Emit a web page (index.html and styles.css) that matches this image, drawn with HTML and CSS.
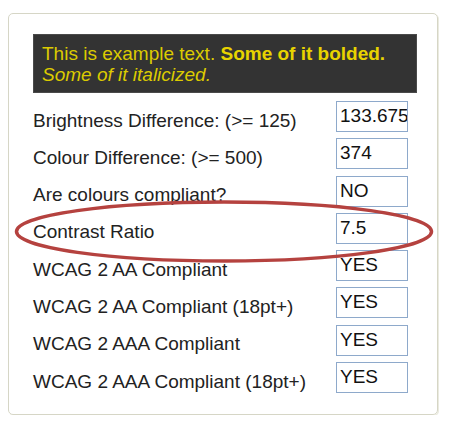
FILE: index.html
```html
<!DOCTYPE html>
<html>
<head>
<meta charset="utf-8">
<link rel="stylesheet" href="styles.css">
</head>
<body>
<div class="card">
  <div class="sample">
    <div>This is example text. <b>Some of it bolded.</b></div>
    <div><i>Some of it italicized.</i></div>
  </div>
  <div class="rows">
    <div class="row"><span class="label">Brightness Difference: (&gt;= 125)</span><span class="field">133.675</span></div>
    <div class="row"><span class="label">Colour Difference: (&gt;= 500)</span><span class="field">374</span></div>
    <div class="row"><span class="label">Are colours compliant?</span><span class="field">NO</span></div>
    <div class="row"><span class="label">Contrast Ratio</span><span class="field">7.5</span></div>
    <div class="row"><span class="label">WCAG 2 AA Compliant</span><span class="field">YES</span></div>
    <div class="row"><span class="label">WCAG 2 AA Compliant (18pt+)</span><span class="field">YES</span></div>
    <div class="row"><span class="label">WCAG 2 AAA Compliant</span><span class="field">YES</span></div>
    <div class="row"><span class="label">WCAG 2 AAA Compliant (18pt+)</span><span class="field">YES</span></div>
  </div>
  <svg class="circle" width="454" height="430" viewBox="0 0 454 430">
    <ellipse cx="224" cy="231.5" rx="207.5" ry="29.5" fill="none" stroke="#b5423f" stroke-width="3.5"/>
  </svg>
</div>
</body>
</html>
```
FILE: styles.css
```css
html, body {
  margin: 0;
  padding: 0;
  background: #fff;
}
body {
  padding: 13px 0 0 8px;
  font-family: "Liberation Sans", Arial, sans-serif;
  font-size: 19px;
  color: #222;
}
.card {
  width: 404px;
  height: 380px;
  border: 1px solid #d6d6c6;
  border-radius: 5px;
  box-shadow: 1px 1px 0 #ebebe0;
  padding: 20px 0 0 24px;
}
.sample {
  width: 367px;
  height: 43px;
  background: #333333;
  border: 1px solid #4a4a4a;
  padding: 7.5px 7px 6.5px 8px;
  color: #dccb00;
  line-height: 21px;
  white-space: nowrap;
}
.sample b {
  color: #e8d300;
}
.rows {
  display: flex;
  flex-direction: column;
  gap: 6.3px;
  margin-top: 8px;
}
.row {
  display: flex;
  height: 31px;
}
.label {
  width: 303px;
  line-height: 21px;
  margin-top: 8.5px;
  white-space: nowrap;
}
.field {
  box-sizing: border-box;
  width: 72px;
  height: 31px;
  border: 1px solid #8ea9cb;
  padding: 0 0 0 3px;
  line-height: 27px;
  overflow: hidden;
  white-space: nowrap;
  color: #111;
}
.circle {
  position: absolute;
  left: 0;
  top: 0;
  pointer-events: none;
}
```
